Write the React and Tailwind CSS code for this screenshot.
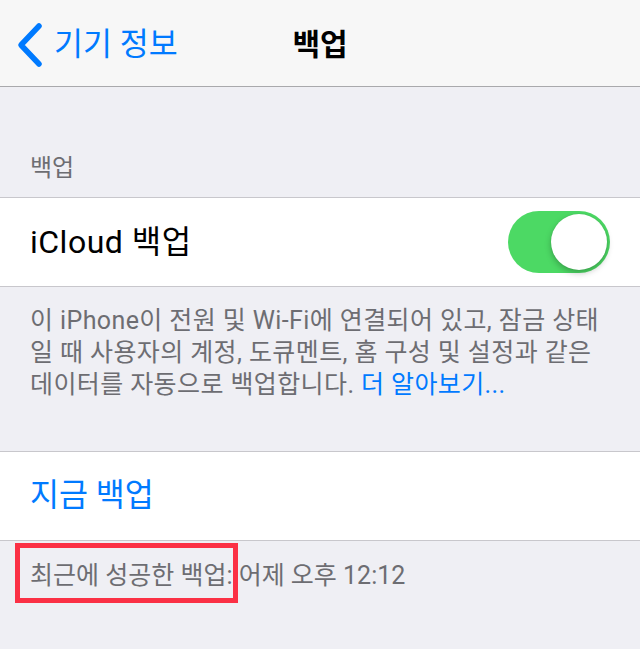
import React from 'react'

const font = { fontFamily: 'Roboto, "Noto Sans CJK KR", sans-serif' }

function BackChevron() {
  return (
    <svg width="28" height="46" viewBox="0 0 28 46" className="shrink-0">
      <polyline
        points="23,4 5,23 23,42"
        fill="none"
        stroke="#007aff"
        strokeWidth="5.5"
        strokeLinecap="round"
        strokeLinejoin="round"
      />
    </svg>
  )
}

function Toggle() {
  return (
    <div className="flex h-[62px] w-[102px] items-center justify-end rounded-full bg-[#4cd964] px-[3px]">
      <div className="h-[56px] w-[56px] rounded-full bg-white shadow-[0_3px_6px_rgba(0,0,0,0.25),0_0_1px_rgba(0,0,0,0.15)]" />
    </div>
  )
}

export default function App() {
  return (
    <div className="min-h-[649px] bg-[#efeff4]" style={font}>
      <div className="grid h-[87px] grid-cols-[1fr_auto_1fr] items-center border-b border-[#a9a9ac] bg-[#f7f7f7] pt-[3px]">
        <div className="flex items-center gap-[10px] pl-[16px] text-[31.5px] text-[#007aff]">
          <BackChevron />
          <span className="leading-none">기기 정보</span>
        </div>
        <div className="text-[30px] font-bold leading-none text-black">백업</div>
        <div />
      </div>

      <div className="px-[30px] pb-[14px] pt-[66px] text-[24px] leading-[30px] text-[#6d6d72]">백업</div>

      <div className="flex h-[90px] items-center justify-between border-y border-[#c8c7cc] bg-white pl-[30px] pr-[30px]">
        <span className="text-[32px] tracking-[0.5px] text-black">iCloud 백업</span>
        <Toggle />
      </div>

      <div className="px-[30px] pb-[50px] pt-[18px] text-[25px] leading-[32px] tracking-[0.4px] text-[#6d6d72]">
        이 iPhone이 전원 및 Wi-Fi에 연결되어 있고, 잠금 상태
        <br />
        일 때 사용자의 계정, 도큐멘트, 홈 구성 및 설정과 같은
        <br />
        데이터를 자동으로 백업합니다. <span className="text-[#007aff]">더 알아보기...</span>
      </div>

      <div className="flex h-[90px] items-center border-y border-[#c8c7cc] bg-white px-[30px]">
        <span className="text-[31.5px] text-[#007aff]">지금 백업</span>
      </div>

      <div className="px-[30px] pt-[19px] text-[25px] leading-[32px] text-[#6d6d72]">
        <span className="relative">
          최근에 성공한 백업:
          <span className="absolute -bottom-[13px] -left-[15px] -right-[6px] -top-[18px] border-[5px] border-[#fb3045]" />
        </span>{' '}
        어제 오후 12:12
      </div>
    </div>
  )
}
